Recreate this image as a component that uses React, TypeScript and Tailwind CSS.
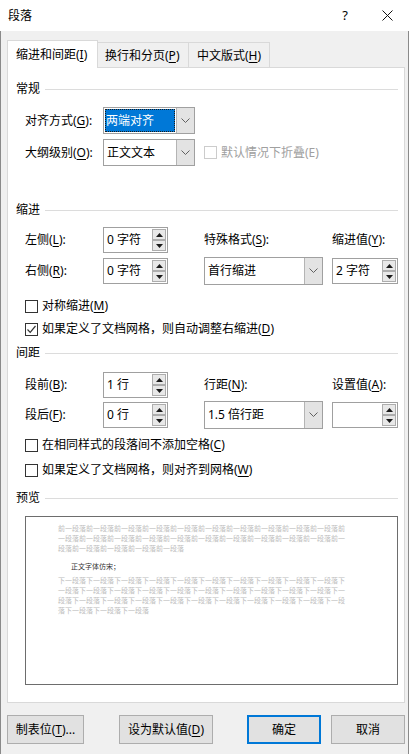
import React from "react";

const U = ({ children }: { children: React.ReactNode }) => (
  <span className="underline underline-offset-[2px]">{children}</span>
);

const Chevron = () => (
  <svg width="9" height="6" viewBox="0 0 9 6">
    <path d="M0.5 0.5 L4.5 4.5 L8.5 0.5" fill="none" stroke="#606060" strokeWidth="1" />
  </svg>
);

const Tri = ({ up }: { up?: boolean }) => (
  <svg width="7" height="4" viewBox="0 0 7 4">
    <path d={up ? "M0 4 L3.5 0 L7 4 Z" : "M0 0 L3.5 4 L7 0 Z"} fill="#1a1a1a" />
  </svg>
);

const Heading = ({ title, mt }: { title: string; mt: string }) => (
  <div className={`${mt} h-[16px] flex items-center pl-[8px] pr-[6px]`}>
    <span className="leading-[16px]">{title}</span>
    <div className="flex-1 h-px bg-[#dcdcdc] ml-[5px]" />
  </div>
);

const Combo = ({ text, w, selected }: { text: string; w: string; selected?: boolean }) => (
  <div className={`${w} h-[27px] border border-[#a0a0a0] bg-white flex`}>
    <div className="flex-1 flex p-[1px]">
      {selected ? (
        <div className="flex-1 bg-[#0078d7] text-white flex items-center pl-[1px] outline-1 outline-dotted outline-[#1a1a1a] -outline-offset-1">
          {text}
        </div>
      ) : (
        <div className="flex-1 flex items-center pl-[2px]">{text}</div>
      )}
    </div>
    <div className="w-[18px] bg-[#e3e3e3] border-l border-[#b4b4b4] flex items-center justify-center">
      <Chevron />
    </div>
  </div>
);

const Spin = ({ text, w }: { text: string; w: string }) => (
  <div className={`${w} h-[26px] border border-[#a0a0a0] bg-white flex`}>
    <div className="flex-1 flex items-center pl-[3px]">{text}</div>
    <div className="w-[14px] mr-[1px] py-[1px] flex flex-col">
      <div className="h-[11px] border border-[#adadad] bg-[#e8e8e8] flex items-center justify-center">
        <Tri up />
      </div>
      <div className="h-[11px] border border-[#adadad] bg-[#e8e8e8] flex items-center justify-center">
        <Tri />
      </div>
    </div>
  </div>
);

const Check = ({ checked, disabled }: { checked?: boolean; disabled?: boolean }) => (
  <div
    className={`w-[13px] h-[13px] border bg-white flex items-center justify-center ${
      disabled ? "border-[#cccccc]" : "border-[#333333]"
    }`}
  >
    {checked && (
      <svg width="11" height="11" viewBox="0 0 11 11">
        <path d="M1.5 5.5 L4.2 8.3 L9.5 2" fill="none" stroke="#333" strokeWidth="1.2" />
      </svg>
    )}
  </div>
);

const CheckRow = ({ mt, checked, children }: { mt: string; checked?: boolean; children: React.ReactNode }) => (
  <div className={`${mt} h-[16px] flex items-center pl-[17px]`}>
    <Check checked={checked} />
    <span className="ml-[4px]">{children}</span>
  </div>
);

const Btn = ({ ml, w, primary, children }: { ml: string; w: string; primary?: boolean; children: React.ReactNode }) => (
  <div
    className={`${ml} ${w} h-[29px] bg-[#e1e1e1] flex items-center justify-center ${
      primary ? "border-2 border-[#0078d7]" : "border border-[#adadad]"
    }`}
  >
    {children}
  </div>
);

export default function App() {
  const before = "前一段落".repeat(25);
  const after = "下一段落".repeat(34);

  return (
    <div className="w-[409px] h-[754px] bg-[#f0f0f0] overflow-hidden text-[12px] text-black [font-family:'Noto_Sans','Noto_Sans_CJK_SC',sans-serif] shadow-[inset_1px_0_0_#8a8a8a,inset_-1px_0_0_#8a8a8a] flex flex-col">
      {/* title bar */}
      <div className="h-[31px] bg-white flex items-center pl-[8px] pr-[16px] shrink-0">
        <span>段落</span>
        <span className="ml-auto text-[13px]">?</span>
        <svg className="ml-[34px]" width="11" height="11" viewBox="0 0 11 11">
          <path d="M0.5 0.5 L10.5 10.5 M10.5 0.5 L0.5 10.5" stroke="#111" strokeWidth="1" />
        </svg>
      </div>

      {/* tabs */}
      <div className="h-[37px] flex items-end pl-[7px] shrink-0">
        <div className="relative z-10 h-[28px] w-[91px] bg-white border-x border-t border-[#d9d9d9] flex items-center pl-[8px]">
          缩进和间距(<U>I</U>)
        </div>
        <div className="h-[26px] w-[91px] border-r border-t border-[#d9d9d9] flex items-center pl-[7px]">
          换行和分页(<U>P</U>)
        </div>
        <div className="h-[26px] w-[81px] border-r border-t border-[#d9d9d9] flex items-center pl-[8px]">
          中文版式(<U>H</U>)
        </div>
      </div>

      {/* panel */}
      <div className="-mt-px ml-[7px] w-[398px] h-[636px] bg-white border border-[#d9d9d9] flex flex-col shrink-0">
        <Heading title="常规" mt="mt-[13px]" />
        <div className="mt-[10px] h-[27px] flex items-center pl-[17px]">
          <span className="w-[78px]">
            对齐方式(<U>G</U>):
          </span>
          <Combo text="两端对齐" w="w-[92px]" selected />
        </div>
        <div className="mt-[5px] h-[27px] flex items-center pl-[17px]">
          <span className="w-[78px]">
            大纲级别(<U>O</U>):
          </span>
          <Combo text="正文文本" w="w-[92px]" />
          <div className="ml-[9px]">
            <Check disabled />
          </div>
          <span className="ml-[4px] text-[#a0a0a0]">默认情况下折叠(E)</span>
        </div>

        <Heading title="缩进" mt="mt-[36px]" />
        <div className="mt-[9px] h-[26px] flex items-center pl-[17px]">
          <span className="w-[78px]">
            左侧(<U>L</U>):
          </span>
          <Spin text="0 字符" w="w-[65px]" />
          <span className="ml-[36px] w-[128px]">
            特殊格式(<U>S</U>):
          </span>
          <span>
            缩进值(<U>Y</U>):
          </span>
        </div>
        <div className="mt-[4px] h-[28px] flex items-center pl-[17px]">
          <span className="w-[78px]">
            右侧(<U>R</U>):
          </span>
          <Spin text="0 字符" w="w-[65px]" />
          <div className="ml-[36px] w-[128px]">
            <div className="w-[119px] [&>div]:h-[28px]">
              <Combo text="首行缩进" w="w-[119px]" />
            </div>
          </div>
          <Spin text="2 字符" w="w-[66px]" />
        </div>
        <CheckRow mt="mt-[13px]">
          对称缩进(<U>M</U>)
        </CheckRow>
        <CheckRow mt="mt-[7px]" checked>
          如果定义了文档网格，则自动调整右缩进(<U>D</U>)
        </CheckRow>

        <Heading title="间距" mt="mt-[8px]" />
        <div className="mt-[11px] h-[26px] flex items-center pl-[17px]">
          <span className="w-[78px]">
            段前(<U>B</U>):
          </span>
          <Spin text="1 行" w="w-[65px]" />
          <span className="ml-[36px] w-[128px]">
            行距(<U>N</U>):
          </span>
          <span>
            设置值(<U>A</U>):
          </span>
        </div>
        <div className="mt-[3px] h-[28px] flex items-center pl-[17px]">
          <span className="w-[78px]">
            段后(<U>F</U>):
          </span>
          <Spin text="0 行" w="w-[65px]" />
          <div className="ml-[36px] w-[128px]">
            <div className="w-[119px] [&>div]:h-[28px]">
              <Combo text="1.5 倍行距" w="w-[119px]" />
            </div>
          </div>
          <Spin text="" w="w-[66px]" />
        </div>
        <CheckRow mt="mt-[8px]">
          在相同样式的段落间不添加空格(<U>C</U>)
        </CheckRow>
        <CheckRow mt="mt-[9px]">
          如果定义了文档网格，则对齐到网格(<U>W</U>)
        </CheckRow>

        <Heading title="预览" mt="mt-[12px]" />
        <div className="mt-[10px] ml-[17px] w-[373px] h-[169px] border border-[#6d6d6d] bg-white pl-[32px] pt-[6px] [font-family:'Noto_Sans_CJK_SC',sans-serif]">
          <p className="w-[288px] text-[7px] leading-[10px] text-[#bdbdbd] break-all">{before}</p>
          <p className="mt-[8px] pl-[13px] text-[7px] leading-[10px] text-[#333]">正文字体仿宋；</p>
          <p className="mt-[4px] w-[288px] text-[7px] leading-[10px] text-[#bdbdbd] break-all">{after}</p>
        </div>
      </div>

      {/* buttons */}
      <div className="mt-[12px] flex">
        <Btn ml="ml-[7px]" w="w-[77px]">
          制表位(<U>T</U>)...
        </Btn>
        <Btn ml="ml-[35px]" w="w-[94px]">
          设为默认值(<U>D</U>)
        </Btn>
        <Btn ml="ml-[34px]" w="w-[74px]" primary>
          确定
        </Btn>
        <Btn ml="ml-[10px]" w="w-[74px]">
          取消
        </Btn>
      </div>
    </div>
  );
}
